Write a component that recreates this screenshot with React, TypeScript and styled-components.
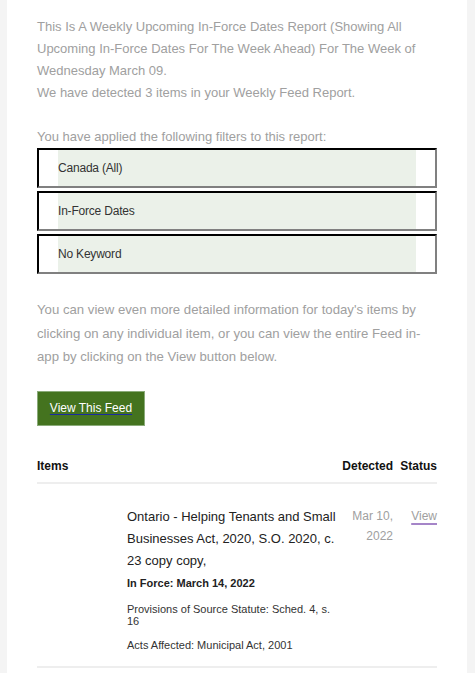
import React from "react";
import styled, { createGlobalStyle } from "styled-components";

const GlobalStyle = createGlobalStyle`
  html, body {
    margin: 0;
    padding: 0;
    background: #f4f4f4;
    font-family: "Liberation Sans", Arial, Helvetica, sans-serif;
  }
`;

const Page = styled.div`
  padding: 0 8px 0 7px;
`;

const Card = styled.div`
  background: #ffffff;
  padding: 16px 30px 40px;
`;

const Intro = styled.p`
  margin: 0;
  font-size: 13px;
  line-height: 22px;
  color: #a0a0a0;
`;

const FilterList = styled.div`
  display: flex;
  flex-direction: column;
  gap: 3px;
  width: 400px;
`;

const FilterBox = styled.div`
  height: 40px;
  box-sizing: border-box;
  border-style: solid;
  border-width: 2px;
  border-color: #000 #808080 #808080 #000;
  padding: 0 19px;
  display: flex;
`;

const FilterCell = styled.div`
  flex: 1;
  background: #ebf1e9;
  display: flex;
  align-items: center;
  font-size: 12px;
  letter-spacing: -0.2px;
  color: #333;
`;

const Body = styled.p`
  margin: 24px 0 0;
  font-size: 13.2px;
  line-height: 23.5px;
  color: #a0a0a0;
`;

const Button = styled.a`
  display: inline-block;
  margin-top: 22px;
  width: 108px;
  height: 35px;
  box-sizing: border-box;
  background: #44731f;
  border: 1px solid #8aab79;
  color: #ffffff;
  font-size: 12px;
  line-height: 33px;
  text-align: center;
  text-decoration: underline;
  text-decoration-color: #1a2ba0;
  text-underline-offset: 2px;
  cursor: pointer;
`;

const Grid = styled.div`
  display: grid;
  grid-template-columns: 90px 212px 54px 44px;
  width: 400px;
`;

const Header = styled(Grid)`
  margin-top: 32px;
  padding-bottom: 8px;
  border-bottom: 2px solid #eeeeee;
  font-size: 12px;
  font-weight: bold;
  line-height: 16px;
  color: #111;
`;

const HeadCell = styled.div<{ $span?: number; $right?: boolean }>`
  grid-column: span ${(p) => p.$span ?? 1};
  text-align: ${(p) => (p.$right ? "right" : "left")};
`;

const Row = styled(Grid)`
  padding: 22px 0 15px;
  border-bottom: 2px solid #eeeeee;
`;

const Title = styled.div`
  font-size: 13px;
  line-height: 22px;
  color: #222;
`;

const InForce = styled.div`
  margin-top: 3px;
  font-size: 11px;
  line-height: 16px;
  font-weight: bold;
  color: #222;
`;

const Detail = styled.div`
  margin-top: 12px;
  font-size: 11px;
  line-height: 12px;
  color: #333;
`;

const DateCell = styled.div`
  text-align: right;
  font-size: 12px;
  line-height: 20px;
  color: #a0a0a0;
`;

const StatusLink = styled.a`
  justify-self: end;
  font-size: 12px;
  line-height: 20px;
  height: 20px;
  color: #a0a0a0;
  text-decoration: underline;
  text-decoration-color: #a585c8;
  text-decoration-thickness: 2px;
  text-underline-offset: 3px;
`;

const filters = ["Canada (All)", "In-Force Dates", "No Keyword"];

export default function App() {
  return (
    <>
      <GlobalStyle />
      <Page>
        <Card>
          <Intro>
            This Is A Weekly Upcoming In-Force Dates Report (Showing All
            Upcoming In-Force Dates For The Week Ahead) For The Week of
            Wednesday March 09.
            <br />
            We have detected 3 items in your Weekly Feed Report.
            <br />
            <br />
            You have applied the following filters to this report:
          </Intro>
          <FilterList>
            {filters.map((f) => (
              <FilterBox key={f}>
                <FilterCell>{f}</FilterCell>
              </FilterBox>
            ))}
          </FilterList>
          <Body>
            You can view even more detailed information for today's items by
            clicking on any individual item, or you can view the entire Feed
            in-app by clicking on the View button below.
          </Body>
          <Button>View This Feed</Button>
          <Header>
            <HeadCell $span={2}>Items</HeadCell>
            <HeadCell $right>Detected</HeadCell>
            <HeadCell $right>Status</HeadCell>
          </Header>
          <Row>
            <div />
            <div>
              <Title>
                Ontario - Helping Tenants and Small Businesses Act, 2020, S.O.
                2020, c. 23 copy copy,
              </Title>
              <InForce>In Force: March 14, 2022</InForce>
              <Detail>Provisions of Source Statute: Sched. 4, s. 16</Detail>
              <Detail>Acts Affected: Municipal Act, 2001</Detail>
            </div>
            <DateCell>
              Mar 10,
              <br />
              2022
            </DateCell>
            <StatusLink>View</StatusLink>
          </Row>
        </Card>
      </Page>
    </>
  );
}
